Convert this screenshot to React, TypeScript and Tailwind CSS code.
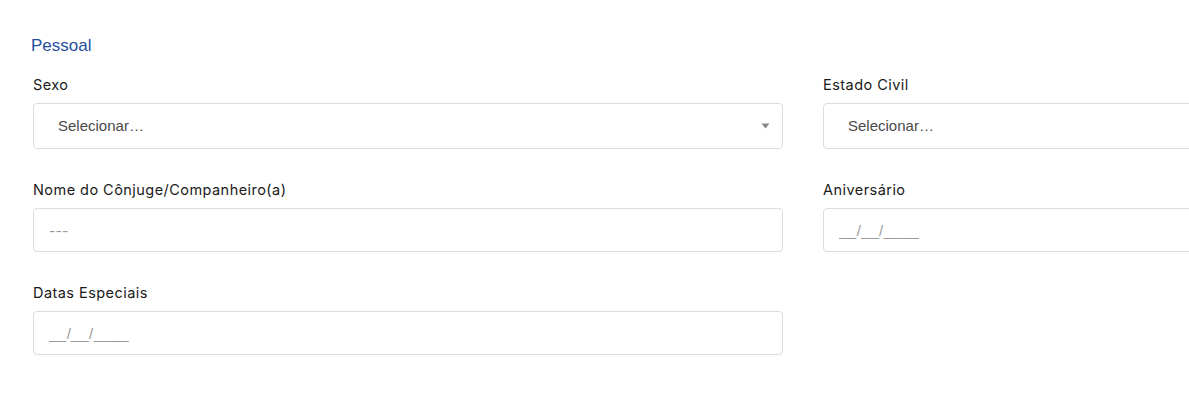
import React from 'react';

const labelFont = { fontFamily: 'Inter, "Noto Sans", sans-serif' };

function Label({ children }: { children: React.ReactNode }) {
	return (
		<label
			className="block text-[14.5px] leading-[20px] text-[#1a1a1a] tracking-[0.45px]"
			style={labelFont}
		>
			{children}
		</label>
	);
}

function SelectField({ label, arrow }: { label: string; arrow?: boolean }) {
	return (
		<div className="flex flex-col gap-2">
			<Label>{label}</Label>
			<div className="relative flex h-[46px] items-center rounded-[4px] border border-[#dcdcdc] bg-white pl-[24px] pr-4">
				<span className="font-['Liberation_Sans',Arial,sans-serif] text-[15px] text-[#4a4a4a]">
					Selecionar…
				</span>
				{arrow && (
					<svg
						className="absolute right-[12px] top-1/2 -translate-y-1/2"
						width="9"
						height="6"
						viewBox="0 0 9 6"
					>
						<path d="M0.5 0.5h8L4.5 5.5z" fill="#8a8a8a" />
					</svg>
				)}
			</div>
		</div>
	);
}

function TextField({
	label,
	placeholder,
	mask,
}: {
	label: string;
	placeholder: string;
	mask?: boolean;
}) {
	return (
		<div className="flex flex-col gap-2">
			<Label>{label}</Label>
			<input
				readOnly
				placeholder={placeholder}
				className={
					mask
						? "h-[44px] w-full rounded-[4px] border border-[#dcdcdc] bg-white px-[15px] font-['Liberation_Sans',Arial,sans-serif] text-[15px] tracking-[0.5px] outline-none placeholder:text-[#9a9a9a]"
						: 'h-[44px] w-full rounded-[4px] border border-[#dcdcdc] bg-white px-[15px] text-[14px] outline-none placeholder:text-[#9a9a9a]'
				}
				style={mask ? undefined : labelFont}
			/>
		</div>
	);
}

export default function App() {
	return (
		<div className="min-h-screen overflow-hidden bg-white">
			<div className="w-[1560px] pl-[33px] pt-[35px]">
				<h2 className="-ml-[2px] font-['Liberation_Sans',Arial,sans-serif] text-[17px] leading-[22px] text-[#1f4f9e]">
					Pessoal
				</h2>
				<div className="mt-[18px] grid grid-cols-[750px_750px] gap-x-[40px] gap-y-[31px]">
					<SelectField label="Sexo" arrow />
					<SelectField label="Estado Civil" />
					<TextField label="Nome do Cônjuge/Companheiro(a)" placeholder="---" />
					<TextField label="Aniversário" placeholder="__/__/____" mask />
					<TextField label="Datas Especiais" placeholder="__/__/____" mask />
				</div>
			</div>
		</div>
	);
}
